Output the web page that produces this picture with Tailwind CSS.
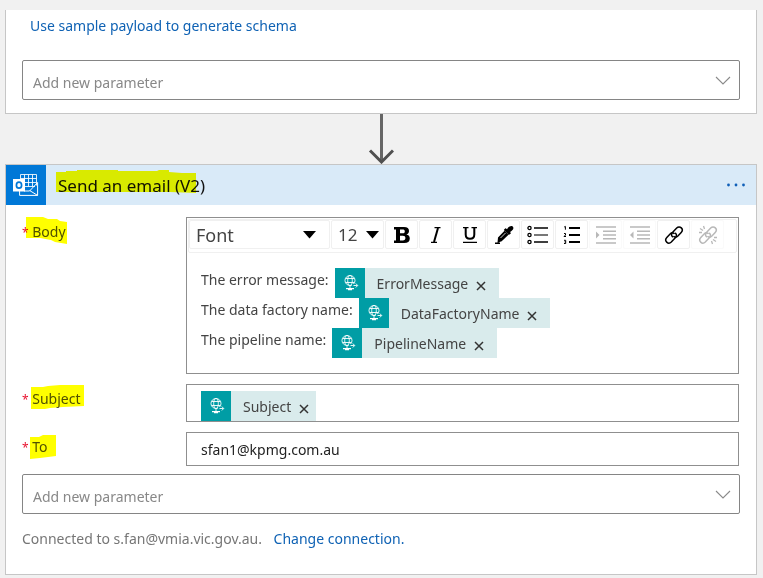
<!DOCTYPE html>
<html lang="en">
<head>
<meta charset="utf-8">
<meta name="viewport" content="width=device-width, initial-scale=1">
<title>Logic app designer</title>
<script src="https://cdn.jsdelivr.net/npm/@tailwindcss/browser@4"></script>
</head>
<body class="min-h-screen bg-[#f1f1f1] pt-[10px] pr-[6px] pb-[3px] pl-[5px] font-['Noto_Sans','Open_Sans',sans-serif] text-[14px] leading-5 text-[#444]">
<svg class="hidden">
  <symbol id="globe" viewBox="0 0 30 30">
    <g fill="none" stroke="#fff" stroke-width=".9">
      <circle cx="15" cy="12.500" r="5"/>
      <ellipse cx="15" cy="12.500" rx="2.300" ry="5"/>
      <path d="M10.500 10.500h9M10.500 14.500h9M15 17.500v3"/>
      <path d="M17 17.500h5" stroke="#009da5" stroke-width="3"/>
      <path d="M18.500 17.500h4M20.800 15.500l1.900 2-1.900 2"/>
    </g>
    <path d="M11 20h8v1.300h-8zM13 21.300h4v1h-4z" fill="#fff"/>
  </symbol>
  <symbol id="close" viewBox="0 0 10 10"><path d="M1 1l8 8M9 1L1 9" stroke="#333" stroke-width="1.500"/></symbol>
  <symbol id="chevron" viewBox="0 0 16 9"><path d="M1 1l7 7 7-7" fill="none" stroke="#8a8a8a" stroke-width="1.100"/></symbol>
  <symbol id="chain" viewBox="0 0 20 20">
    <g fill="none" stroke="currentColor" stroke-width="1.500" stroke-linecap="round">
      <path d="M8.500 11.800c-1.500-1.500-1-3.300.2-4.600l4-4.200c1.400-1.400 3.300-1.400 4.600-.1s1.200 3.200-.1 4.600l-3.300 3.500c-1.200 1.200-2.600 1.500-3.900.6"/>
      <path d="M11.500 8.200c1.500 1.500 1 3.300-.2 4.600l-4 4.200c-1.400 1.400-3.300 1.400-4.600.1s-1.200-3.200.1-4.600l3.300-3.500c1.200-1.200 2.600-1.500 3.900-.6"/>
    </g>
  </symbol>
</svg>
<main>
  <section class="border border-t-0 border-[#c6c6c6] bg-white px-4 pt-[6px] pb-[13px]">
    <a href="#" class="ml-2 block text-[#0f62b4]">Use sample payload to generate schema</a>
    <div class="relative mt-6">
      <select aria-label="Add new parameter" class="block h-10 w-full appearance-none rounded-[2px] border border-[#858585] bg-white pt-[6px] pl-[10px] text-[#888]"><option>Add new parameter</option></select>
      <svg class="pointer-events-none absolute top-4 right-[9px] h-[9px] w-4"><use href="#chevron"/></svg>
    </div>
  </section>

  <svg class="mx-auto block h-[50px] w-[26px]" viewBox="0 0 26 50" fill="none"><path d="M13.500 0v47" stroke="#666" stroke-width="3"/><path d="M2 36.500l11.500 11.500L25 36.500" stroke="#505050" stroke-width="3"/></svg>

  <section class="border border-[#c6c6c6] bg-white">
    <header class="flex h-10 items-center bg-[#d9eaf8]">
      <svg class="size-10 shrink-0" viewBox="0 0 40 40">
        <rect width="40" height="40" fill="#0078d7"/>
        <g fill="none" stroke="#fff" stroke-width="1">
          <path d="M14.500 14V9.500h16v11M14.500 13.500h16M18.500 9.500v5M22.500 9.500v12M26.500 9.500v12M19 17.500h11.500M19 21.500h10" stroke-opacity=".85"/>
          <path d="M13.600 26v4.400h18V17.500l-8 8.500H18M23.600 25.500l8 4.900"/>
        </g>
        <path d="M7 14h12v12.500H7z" fill="#fff"/>
        <ellipse cx="13" cy="20.200" rx="2.600" ry="3" fill="none" stroke="#0078d7" stroke-width="1.700"/>
      </svg>
      <h1 class="relative ml-3 pt-[2px] text-[17px] text-[#111]">Send an email (V2)
        <svg class="pointer-events-none absolute -top-[4px] -left-[2px] h-[24px] w-[140px] mix-blend-multiply" viewBox="0 0 140 24"><path d="M0 2h10V1h11V0h41v1h39l2-1h10v2l13 1h14v20l-26-1H0z" fill="#ff0"/></svg>
      </h1>
      <button aria-label="More options" class="mr-[10px] ml-auto"><svg class="h-4 w-5" viewBox="0 0 20 16" fill="#0f5fb8"><circle cx="2.500" cy="8" r="1.400"/><circle cx="10" cy="8" r="1.400"/><circle cx="17.500" cy="8" r="1.400"/></svg></button>
    </header>

    <div class="px-4 pt-3 pb-[25px]">
      <div class="flex flex-col gap-[10px] pr-px">
        <div class="flex">
          <div id="body-label" class="relative w-[164px] shrink-0 pt-[5px]"><span class="text-[12px] text-[#e8112d]">*</span> <span class="text-[#505050]">Body</span>
            <svg class="pointer-events-none absolute top-0 left-1 h-[28px] w-[41px] mix-blend-multiply" viewBox="0 0 41 28"><path d="M0 0h17l5 2h9l3 2 7 1v22l-12-2-4-2-11-2H0z" fill="#ff0"/></svg>
          </div>
          <div class="min-w-0 grow border border-[#8f8f8f] p-px pb-[15px]">
            <div role="toolbar" aria-label="Formatting" class="flex h-[34px] gap-px rounded-[2px] border border-[#f0f0f0] text-black">
              <div class="relative w-[141px]"><select aria-label="Font" class="h-[29px] w-full appearance-none rounded-[2px] border border-[#f0f0f0] bg-white pl-[6px] text-[18px] text-[#444]"><option>Font</option></select><svg class="pointer-events-none absolute top-[11px] right-[14px] h-[8px] w-[13px]"><path d="M0 0h13L6.500 7.500z"/></svg></div>
              <div class="relative w-[53px]"><select aria-label="Font size" class="h-[29px] w-full appearance-none rounded-[2px] border border-[#f0f0f0] bg-white pl-[6px] text-[17px] text-[#444]"><option>12</option></select><svg class="pointer-events-none absolute top-[11px] right-[5px] h-[8px] w-[13px]"><path d="M0 0h13L6.500 7.500z"/></svg></div>
              <button aria-label="Bold" class="h-[29px] w-[33px] rounded-[2px] border border-[#f0f0f0]"><svg class="mx-auto size-5" viewBox="0 0 20 20"><path fill-rule="evenodd" d="M2 2h10c3.500 0 5 1.500 5 4 0 1.900-1 3-2.600 3.500 2.200.5 3.400 1.800 3.400 4 0 3-2 4.500-5.600 4.500H2v-2.500h2v-11H2zM8 4.500V8.300h2.500c1.500 0 2.300-.6 2.300-1.900s-.8-1.900-2.300-1.900zM8 10.800v4.700h2.800c1.700 0 2.600-.8 2.600-2.400s-.9-2.300-2.600-2.300z"/></svg></button>
              <button aria-label="Italic" class="h-[29px] w-[33px] rounded-[2px] border border-[#f0f0f0]"><svg class="mx-auto size-5" viewBox="0 0 20 20" fill="none" stroke="#000"><path d="M8.500 2.700h6M5 17.300h6" stroke-width="1.200"/><path d="M12 3L8 17" stroke-width="2"/></svg></button>
              <button aria-label="Underline" class="h-[29px] w-[33px] rounded-[2px] border border-[#f0f0f0]"><svg class="mx-auto size-5" viewBox="0 0 20 20" fill="none" stroke="#000"><path d="M3 2.700h5.500M11.500 2.700H17M3 17.300h14" stroke-width="1.300"/><path d="M5.700 3v6.500c0 3 1.300 4.300 4.300 4.300s4.300-1.300 4.300-4.300V3" stroke-width="2"/></svg></button>
              <button aria-label="Text color" class="h-[29px] w-[33px] rounded-[2px] border border-[#f0f0f0]"><svg class="mx-auto size-5" viewBox="0 0 20 20"><path d="M4 12.500l6.500-6.800 4 4-6.800 6.500-4.200 1.600zM10.500 4.200l1.200-1 1.300 1c1.300-2.100 2.900-3.400 4.700-3.200 1.800.2 2.200 2.200 1 3.700-.7.900-1.600 1.600-2.600 2.200l.8 1.300-1.200 1.200zM1 17.500h5V19H1z"/><path d="M10.500 4.200l5 5" stroke="#000" stroke-width="2"/><path d="M6.500 13l5-5" stroke="#fff" stroke-width=".8"/></svg></button>
              <button aria-label="Bulleted list" class="h-[29px] w-[33px] rounded-[2px] border border-[#f0f0f0]"><svg class="mx-auto h-5 w-[21px]" viewBox="0 0 21 20" fill="none" stroke="#000"><circle cx="2.500" cy="3" r="1.600" stroke-width="1.300"/><circle cx="2.500" cy="10" r="1.600" stroke-width="1.300"/><circle cx="2.500" cy="17" r="1.600" stroke-width="1.300"/><path d="M7 3h14M7 17h14" stroke-width="1.600"/><path d="M7 10h14" stroke="#777" stroke-width="2"/></svg></button>
              <button aria-label="Numbered list" class="h-[29px] w-[33px] rounded-[2px] border border-[#f0f0f0]"><svg class="mx-auto size-5" viewBox="0 0 20 20" fill="none" stroke="#000"><path d="M7 3h11M7 10h11M7 17h11" stroke-width="2"/><path d="M2.200 2l1.200-.6v3.300M2 8.500h1.500V10L2 11.500h2M2 15.300h1.700v3.200H2M2.500 16.900h1.200" stroke-width="1"/></svg></button>
              <button aria-label="Increase indent" disabled class="h-[29px] w-[33px] rounded-[2px] border border-[#fafafa]"><svg class="mx-auto h-5 w-[22px]" viewBox="0 0 22 20" stroke="#b8b8b8"><path d="M1 2h20M8 6.200h13M8 10h13M8 13.800h13M1 18h20" stroke-width="1.600"/><path d="M1 6.500v7L4.500 10z" fill="#b8b8b8" stroke="none"/></svg></button>
              <button aria-label="Decrease indent" disabled class="h-[29px] w-[33px] rounded-[2px] border border-[#fafafa]"><svg class="mx-auto h-5 w-[22px]" viewBox="0 0 22 20" stroke="#b8b8b8"><path d="M1 2h20M8 6.200h13M8 10h13M8 13.800h13M1 18h20" stroke-width="1.600"/><path d="M4.500 6.500v7L1 10z" fill="#b8b8b8" stroke="none"/></svg></button>
              <button aria-label="Insert link" class="h-[29px] w-[33px] rounded-[2px] border border-[#f0f0f0]"><svg class="mx-auto size-5"><use href="#chain"/></svg></button>
              <button aria-label="Remove link" disabled class="h-[29px] w-[33px] rounded-[2px] border border-[#fafafa] text-[#b8b8b8]"><svg class="mx-auto size-5" viewBox="0 0 20 20"><use href="#chain"/><path d="M5.500 1l1 3M2 3.500l3 2M1 7.500h3M14.500 19l-1-3M18 16.500l-3-2M19 12.500h-3" stroke="currentColor" stroke-width="1.300"/></svg></button>
            </div>
            <div role="textbox" aria-labelledby="body-label" aria-multiline="true" class="mt-[15px] pl-[13px]">
              <div class="flex h-[30px] gap-[6px]"><span class="pt-[2px]">The error message:</span><span class="flex items-center bg-[#d9ebec] pr-[13px]"><svg class="size-[30px]"><rect width="30" height="30" fill="#009da5"/><use href="#globe"/></svg><span class="pt-[2px] pl-3">ErrorMessage</span><button aria-label="Remove ErrorMessage" class="ml-2 pt-[6px]"><svg class="size-[10px]"><use href="#close"/></svg></button></span></div>
              <div class="flex h-[30px] gap-[6px]"><span class="pt-[2px]">The data factory name:</span><span class="flex items-center bg-[#d9ebec] pr-[13px]"><svg class="size-[30px]"><rect width="30" height="30" fill="#009da5"/><use href="#globe"/></svg><span class="pt-[2px] pl-3">DataFactoryName</span><button aria-label="Remove DataFactoryName" class="ml-2 pt-[6px]"><svg class="size-[10px]"><use href="#close"/></svg></button></span></div>
              <div class="flex h-[30px] gap-[6px]"><span class="pt-[2px]">The pipeline name:</span><span class="flex items-center bg-[#d9ebec] pr-[13px]"><svg class="size-[30px]"><rect width="30" height="30" fill="#009da5"/><use href="#globe"/></svg><span class="pt-[2px] pl-3">PipelineName</span><button aria-label="Remove PipelineName" class="ml-2 pt-[6px]"><svg class="size-[10px]"><use href="#close"/></svg></button></span></div>
            </div>
          </div>
        </div>

        <div class="flex">
          <div id="subject-label" class="relative w-[164px] shrink-0 pt-[5px]"><span class="text-[12px] text-[#e8112d]">*</span> <span class="text-[#505050]">Subject</span>
            <svg class="pointer-events-none absolute top-px left-[9px] h-[24px] w-[53px] mix-blend-multiply" viewBox="0 0 53 24"><path d="M0 2h12l5-1 12-1h24v21l-21 1-13 1-5 1H0z" fill="#ff0"/></svg>
          </div>
          <div role="textbox" aria-labelledby="subject-label" class="flex min-w-0 grow border border-[#8f8f8f] pt-[6px] pl-[14px]">
            <span class="flex h-[30px] items-center bg-[#d9ebec] pr-[7px]"><svg class="size-[30px]"><rect width="30" height="30" fill="#009da5"/><use href="#globe"/></svg><span class="pt-[2px] pl-3">Subject</span><button aria-label="Remove Subject" class="ml-2 pt-[6px]"><svg class="size-[10px]"><use href="#close"/></svg></button></span>
          </div>
        </div>

        <div class="flex">
          <label for="to" class="relative w-[164px] shrink-0 pt-[5px]"><span class="text-[12px] text-[#e8112d]">*</span> <span class="text-[#505050]">To</span>
            <svg class="pointer-events-none absolute top-[3px] left-2 h-[24px] w-[26px] mix-blend-multiply" viewBox="0 0 26 24"><path d="M0 2h9l4-2h13v21l-8 1-8 1-10 1z" fill="#ff0"/></svg>
          </label>
          <input id="to" type="text" value="sfan1@kpmg.com.au" class="h-[34px] min-w-0 grow border border-[#8f8f8f] pl-[14px] text-[#222]">
        </div>
      </div>

      <div class="relative mt-2">
        <select aria-label="Add new parameter" class="block h-10 w-full appearance-none rounded-[2px] border border-[#858585] bg-white pt-[6px] pl-[10px] text-[#888]"><option>Add new parameter</option></select>
        <svg class="pointer-events-none absolute top-4 right-[9px] h-[9px] w-4"><use href="#chevron"/></svg>
      </div>
      <p class="mt-[15px] text-[#767676]">Connected to s.fan@vmia.vic.gov.au. <a href="#" class="ml-2 text-[#0f62b4]">Change connection.</a></p>
    </div>
  </section>
</main>
</body>
</html>
